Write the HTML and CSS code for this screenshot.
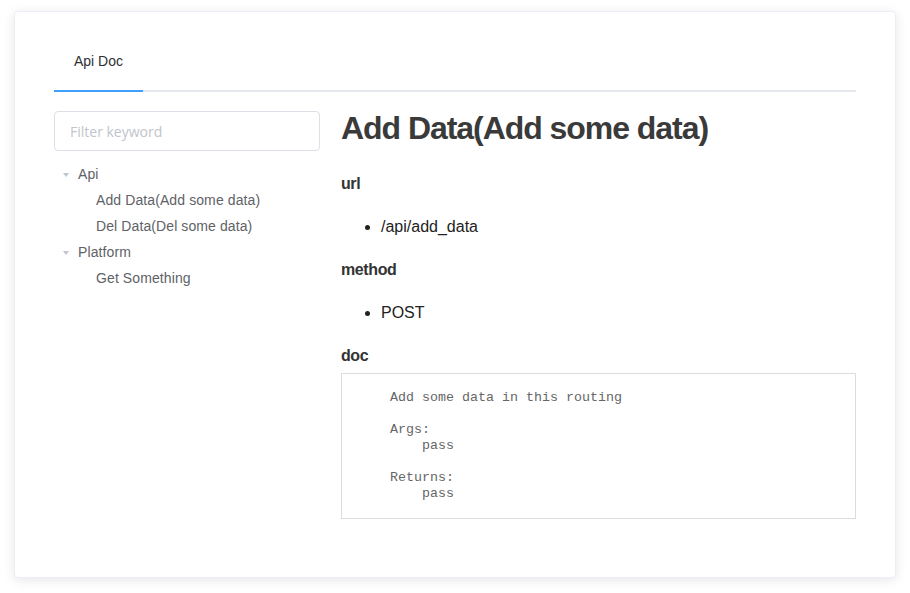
FILE: index.html
```html
<!DOCTYPE html>
<html lang="en">
<head>
<meta charset="utf-8">
<title>Api Doc</title>
<link rel="stylesheet" href="styles.css">
</head>
<body>
<div class="card">
  <div class="tabs">
    <div class="tab is-active">Api Doc</div>
  </div>
  <div class="layout">
    <aside class="side">
      <input class="filter" type="text" placeholder="Filter keyword">
      <ul class="tree">
        <li class="node">
          <div class="row"><span class="caret"></span><span class="label">Api</span></div>
          <ul class="children">
            <li class="row leaf"><span class="caret blank"></span><span class="label">Add Data(Add some data)</span></li>
            <li class="row leaf"><span class="caret blank"></span><span class="label">Del Data(Del some data)</span></li>
          </ul>
        </li>
        <li class="node">
          <div class="row"><span class="caret"></span><span class="label">Platform</span></div>
          <ul class="children">
            <li class="row leaf"><span class="caret blank"></span><span class="label">Get Something</span></li>
          </ul>
        </li>
      </ul>
    </aside>
    <main class="doc">
      <h1 class="title">Add Data(Add some data)</h1>
      <h3 class="label-h">url</h3>
      <ul class="bullets"><li>/api/add_data</li></ul>
      <h3 class="label-h">method</h3>
      <ul class="bullets"><li>POST</li></ul>
      <h3 class="label-h">doc</h3>
      <pre class="docbox">    Add some data in this routing

    Args:
        pass

    Returns:
        pass</pre>
    </main>
  </div>
</div>
</body>
</html>
```
FILE: styles.css
```css
* { box-sizing: border-box; }
html, body { background: #fff; }
body {
  margin: 0;
  padding: 11px 14px 16px;
  font-family: "Liberation Sans", Arial, sans-serif;
  color: #303133;
}
.card {
  border: 1px solid #ebeef5;
  border-radius: 4px;
  background: #fff;
  box-shadow: 0 2px 12px 0 rgba(0, 0, 0, 0.1);
  padding: 20px 39px 58px;
}
.tabs {
  display: flex;
  border-bottom: 2px solid #e4e7ed;
}
.tab {
  position: relative;
  height: 58px;
  line-height: 58px;
  padding: 0 20px;
  font-size: 14px;
  color: #303133;
}
.tab.is-active::after {
  content: "";
  position: absolute;
  left: 0;
  right: 0;
  bottom: -2px;
  height: 2px;
  background: #409eff;
}
.layout {
  display: grid;
  grid-template-columns: 267px 1fr;
  margin-top: 19px;
}
.side { display: flex; flex-direction: column; }
.filter {
  width: 266px;
  height: 40px;
  border: 1px solid #dcdfe6;
  border-radius: 4px;
  padding: 0 15px;
  font-family: "Open Sans", "Noto Sans", sans-serif;
  font-size: 14px;
  color: #606266;
  outline: none;
  background: #fff;
}
.filter::placeholder { color: #c0c4cc; }
.tree, .children { list-style: none; margin: 0; padding: 0; }
.tree { margin-top: 10px; }
.row {
  display: flex;
  align-items: center;
  height: 26px;
  font-size: 14px;
  letter-spacing: 0.1px;
  color: #606266;
}
.children .row { padding-left: 18px; }
.caret {
  width: 24px;
  height: 26px;
  display: flex;
  align-items: center;
  justify-content: center;
}
.caret::before {
  content: "";
  width: 0;
  height: 0;
  border-left: 3px solid transparent;
  border-right: 3px solid transparent;
  border-top: 4px solid #c0c4cc;
  margin-top: 1px;
}
.caret.blank::before { border-top-color: transparent; }
.doc { padding-left: 20px; }
.title {
  margin: -1px 0 0;
  font-size: 32px;
  line-height: 37px;
  font-weight: bold;
  letter-spacing: -1.05px;
  color: #3a3a3a;
}
.label-h {
  margin: 28px 0 0;
  font-size: 16px;
  line-height: 18px;
  font-weight: bold;
  letter-spacing: -0.4px;
  color: #333;
}
.bullets {
  margin: 25px 0 0;
  padding-left: 40px;
  font-size: 16px;
  line-height: 18px;
  color: #222;
}
.bullets + .label-h { margin-top: 25px; }
.docbox {
  margin: 8px 0 0;
  border: 1px solid #dcdcdc;
  padding: 16px 16px;
  font-family: "Liberation Mono", monospace;
  font-size: 13.33px;
  line-height: 16px;
  color: #666;
  white-space: pre;
}
```
